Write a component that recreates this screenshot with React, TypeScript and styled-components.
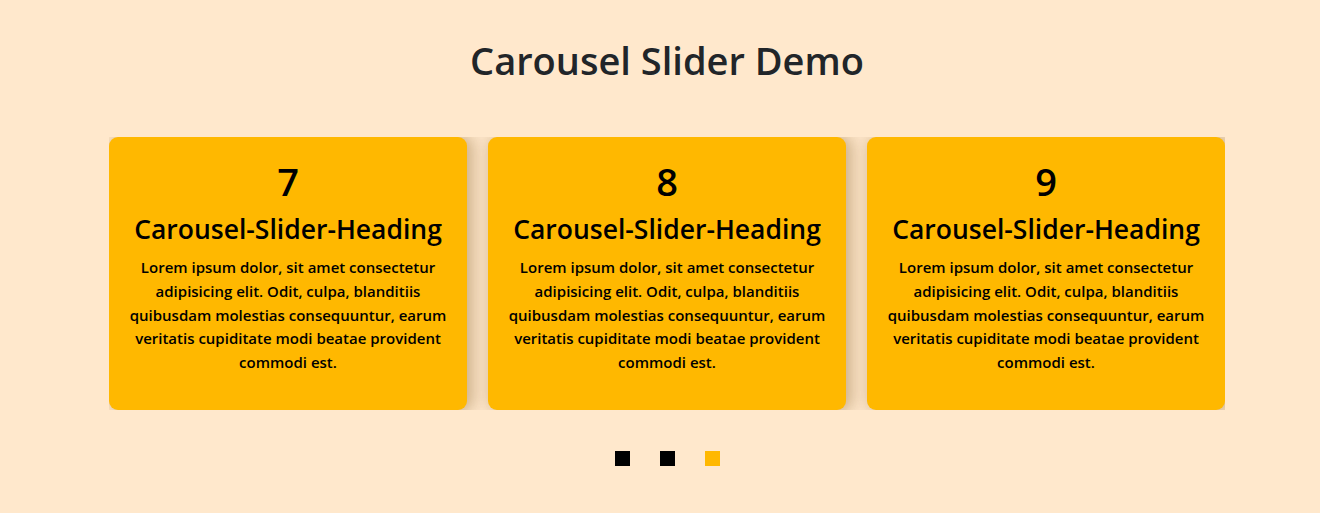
import React from "react";
import styled, { createGlobalStyle } from "styled-components";

const Global = createGlobalStyle`
  * { box-sizing: border-box; }
  html, body { margin: 0; padding: 0; }
  body {
    background: #ffe8cc;
    font-family: "Open Sans", "Noto Sans", sans-serif;
    color: #212529;
  }
`;

const Page = styled.div`
  display: flex;
  flex-direction: column;
  align-items: center;
  padding: 36px 0 0 14px;
`;

const Title = styled.h1`
  margin: 0;
  font-size: 38px;
  font-weight: 600;
  line-height: 48px;
  color: #212529;
`;

const Viewport = styled.div`
  margin-top: 53px;
  width: 1116px;
  height: 273px;
  overflow: hidden;
`;

const Track = styled.div`
  display: flex;
  gap: 21px;
  height: 100%;
`;

const Card = styled.div`
  flex: 0 0 358px;
  height: 100%;
  background: #ffb800;
  border-radius: 9px;
  box-shadow: 4px 0 16px 2px rgba(110, 70, 10, 0.35);
  padding: 20px 16px 0;
  display: flex;
  flex-direction: column;
  align-items: center;
  text-align: center;
  color: #000;
`;

const Num = styled.div`
  font-size: 38px;
  font-weight: 600;
  line-height: 48px;
`;

const Heading = styled.h3`
  margin: 7px 0 0;
  font-size: 26.5px;
  font-weight: 600;
  line-height: 34px;
`;

const Text = styled.p`
  margin: 10px 0 0;
  font-size: 15px;
  font-weight: 600;
  line-height: 23.8px;
`;

const Dots = styled.div`
  display: flex;
  gap: 30px;
  margin-top: 41px;
`;

const Dot = styled.span<{ $active?: boolean }>`
  width: 15px;
  height: 15px;
  background: ${(p) => (p.$active ? "#ffb800" : "#000")};
`;

const lorem =
  "Lorem ipsum dolor, sit amet consectetur adipisicing elit. Odit, culpa, blanditiis quibusdam molestias consequuntur, earum veritatis cupiditate modi beatae provident commodi est.";

export default function App() {
  return (
    <>
      <Global />
      <Page>
        <Title>Carousel Slider Demo</Title>
        <Viewport>
          <Track>
            {[7, 8, 9].map((n) => (
              <Card key={n}>
                <Num>{n}</Num>
                <Heading>Carousel-Slider-Heading</Heading>
                <Text>{lorem}</Text>
              </Card>
            ))}
          </Track>
        </Viewport>
        <Dots>
          <Dot />
          <Dot />
          <Dot $active />
        </Dots>
      </Page>
    </>
  );
}
